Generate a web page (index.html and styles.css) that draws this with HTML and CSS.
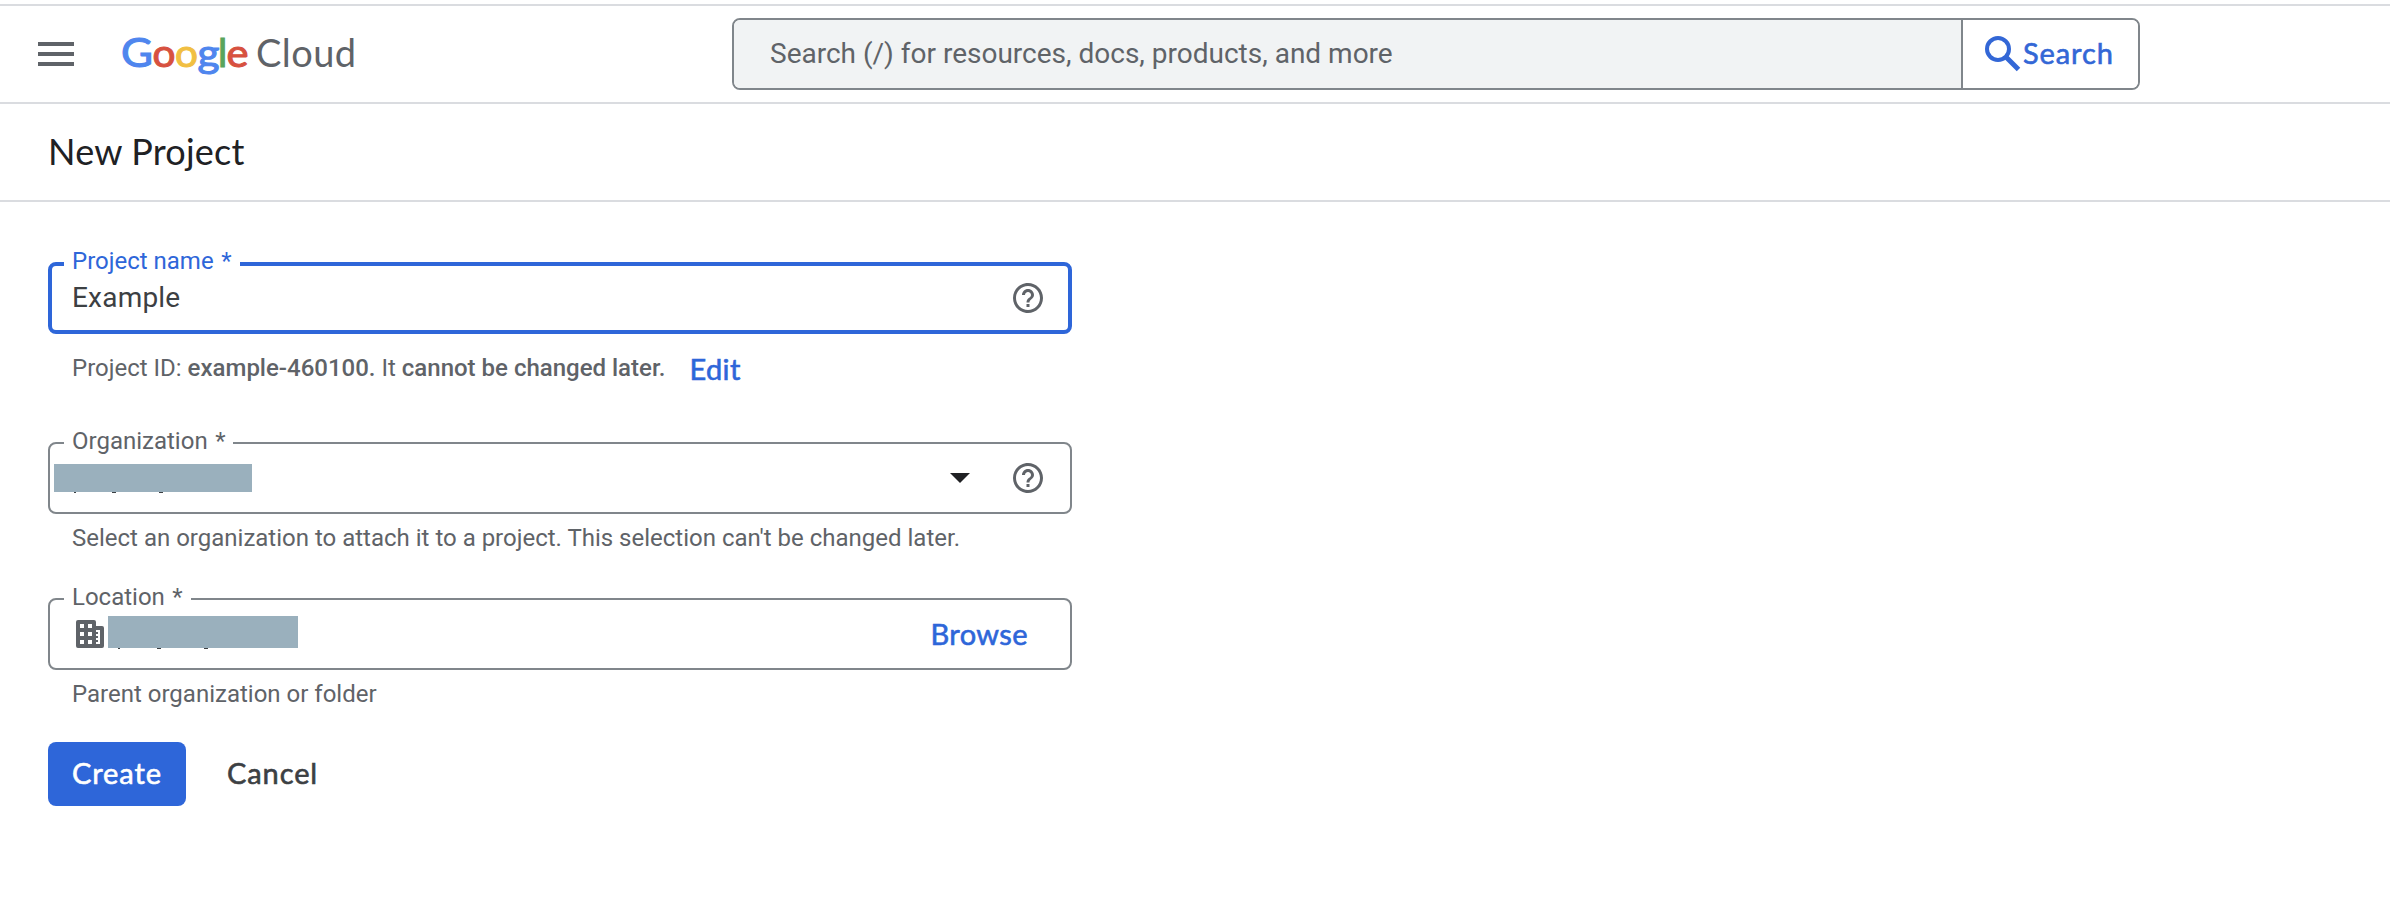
FILE: index.html
```html
<!DOCTYPE html>
<html lang="en">
<head>
<meta charset="utf-8">
<title>New Project</title>
<link rel="stylesheet" href="styles.css">
</head>
<body>
<header class="topbar">
  <button class="menu" aria-label="Menu"><i></i><i></i><i></i></button>
  <div class="logo" aria-label="Google Cloud">
    <svg width="240" height="60" viewBox="0 0 240 60">
      <g class="logo-google"><text x="0" y="43" textLength="32" lengthAdjust="spacingAndGlyphs" fill="#4f86ee" class="logo-cap">G</text><text x="31.500" y="43" textLength="23" lengthAdjust="spacingAndGlyphs" fill="#d75140">o</text><text x="54" y="43" textLength="23" lengthAdjust="spacingAndGlyphs" fill="#f1bf42">o</text><text x="76.500" y="43" textLength="22" lengthAdjust="spacingAndGlyphs" fill="#4f86ee">g</text><text x="97" y="43" fill="#58a55c">l</text><text x="105.500" y="43" textLength="22" lengthAdjust="spacingAndGlyphs" fill="#d75140">e</text></g>
      <text x="135" y="43" textLength="100" class="logo-cloud">Cloud</text>
    </svg>
  </div>
  <div class="search">
    <div class="search-input">Search (/) for resources, docs, products, and more</div>
    <button class="search-button">
      <svg width="36" height="36" viewBox="0 0 36 36" fill="none" stroke="currentColor"><circle cx="13" cy="13" r="11" stroke-width="4"/><path d="M21 21L33.500 33.500" stroke-width="5"/></svg>
      <span>Search</span>
    </button>
  </div>
</header>
<div class="titlebar"><h1>New Project</h1></div>
<main class="form">
  <div class="field focused">
    <label class="label">Project name<span class="star">*</span></label>
    <span class="value">Example</span>
    <svg class="help" width="36" height="36" viewBox="0 0 24 24"><path d="M11 18h2v-2h-2v2zm1-16C6.480 2 2 6.480 2 12s4.480 10 10 10 10-4.480 10-10S17.520 2 12 2zm0 18c-4.410 0-8-3.590-8-8s3.590-8 8-8 8 3.590 8 8-3.590 8-8 8zm0-14c-2.210 0-4 1.790-4 4h2c0-1.100.9-2 2-2s2 .9 2 2c0 2-3 1.750-3 5h2c0-2.250 3-2.500 3-5 0-2.210-1.790-4-4-4z"/></svg>
  </div>
  <div class="project-id"><span class="id-text">Project ID: <b>example-460100.</b> It <b>cannot be changed later.</b></span><a class="edit">Edit</a></div>

  <div class="field">
    <label class="label">Organization<span class="star">*</span></label>
    <span class="redacted org"><i></i><i></i><i></i></span>
    <svg class="arrow" width="20" height="10" viewBox="0 0 20 10"><path d="M0 0h20L10 10z"/></svg>
    <svg class="help" width="36" height="36" viewBox="0 0 24 24"><path d="M11 18h2v-2h-2v2zm1-16C6.480 2 2 6.480 2 12s4.480 10 10 10 10-4.480 10-10S17.520 2 12 2zm0 18c-4.410 0-8-3.590-8-8s3.590-8 8-8 8 3.590 8 8-3.590 8-8 8zm0-14c-2.210 0-4 1.790-4 4h2c0-1.100.9-2 2-2s2 .9 2 2c0 2-3 1.750-3 5h2c0-2.250 3-2.500 3-5 0-2.210-1.790-4-4-4z"/></svg>
  </div>
  <p class="hint hint-org">Select an organization to attach it to a project. This selection can't be changed later.</p>

  <div class="field">
    <label class="label">Location<span class="star">*</span></label>
    <svg class="building" width="28" height="28" viewBox="0 0 28 28"><path fill-rule="evenodd" d="M2 0H18Q20 0 20 2V6H26Q28 6 28 8V26Q28 28 26 28H2Q0 28 0 26V2Q0 0 2 0ZM4 4V8H8V4ZM12 4V8H16V4ZM4 12V16H8V12ZM12 12V16H16V12ZM4 20V24H8V20ZM12 20V24H16V20ZM20 10V12H22V14H20V16H22V18H20V20H22V22H20V24H24V10Z"/></svg>
    <span class="redacted loc"><i></i><i></i><i></i></span>
    <a class="browse">Browse</a>
  </div>
  <p class="hint hint-loc">Parent organization or folder</p>

  <div class="actions">
    <button class="create">Create</button>
    <button class="cancel">Cancel</button>
  </div>
</main>
</body>
</html>
```
FILE: styles.css
```css
* { box-sizing: border-box; }
body { margin: 0; background: #fff; color: #3c4043; font-family: Roboto, sans-serif; font-size: 28px; }
button { border: 0; margin: 0; padding: 0; background: none; font: inherit; letter-spacing: inherit; }
svg { display: block; flex: none; }

.topbar { margin-top: 4px; height: 100px; border-top: 2px solid #dadce0; border-bottom: 2px solid #dadce0; display: flex; align-items: center; padding-left: 38px; }
.menu { width: 36px; display: flex; flex-direction: column; gap: 6px; }
.menu i { height: 4px; background: #5f6368; }
.logo { width: 240px; height: 60px; margin-left: 47px; margin-right: 371px; }
.logo svg { overflow: visible; }
.logo text { font-family: Lato, sans-serif; font-size: 39px; }
.logo-google text { stroke-width: 1.1px; }
.logo-google text[fill="#4f86ee"] { stroke: #4f86ee; }
.logo-google text[fill="#d75140"] { stroke: #d75140; }
.logo-google text[fill="#f1bf42"] { stroke: #f1bf42; }
.logo-google text[fill="#58a55c"] { stroke: #58a55c; }
.logo .logo-cap { font-size: 41px; }
.logo .logo-cloud { fill: #5f6368; font-size: 38px; }

.search { width: 1408px; height: 72px; border: 2px solid #80868b; border-radius: 8px; display: flex; overflow: hidden; }
.search-input { flex: 1; background: #f1f3f4; color: #5f6368; padding-left: 36px; line-height: 68px; white-space: nowrap; }
.search-button { width: 177px; border-left: 2px solid #80868b; background: #fff; color: #3367d6; display: flex; align-items: center; padding-left: 22px; gap: 2px; }
.search-button, .edit, .browse, .actions { font: 400 29px/66px Lato, sans-serif; letter-spacing: 0.9px; -webkit-text-stroke: 0.6px currentColor; }
.search-button span { margin-top: -2px; }

.titlebar { height: 98px; border-bottom: 2px solid #dadce0; padding-left: 48px; }
h1 { margin: 0; font: 400 36px/94px Lato, sans-serif; color: #202124; letter-spacing: 0.2px; }

.form { width: 1072px; padding: 60px 0 0 48px; }
.field { position: relative; height: 72px; border: 2px solid #80868b; border-radius: 8px; display: flex; align-items: center; }
.field.focused { border: 4px solid #2e66d9; }
.label { position: absolute; left: 14px; top: -17px; padding: 0 8px; background: #fff; color: #5f6368; font-size: 24px; line-height: 28px; white-space: nowrap; }
.focused .label { left: 12px; top: -19px; color: #2e66d9; }
.star { margin-left: 7.500px; }
.value { margin: -2px 0 0 20px; letter-spacing: 0.2px; }
.help { margin-left: auto; margin-right: 24px; fill: #5f6368; }
.focused .help { margin-right: 22px; }
.arrow { margin-left: auto; fill: #202124; }
.arrow + .help { margin-left: 40px; }

.project-id { height: 108px; padding: 16px 0 0 24px; display: flex; align-items: flex-start; gap: 24px; color: #5f6368; font-size: 24px; line-height: 36px; white-space: nowrap; }
.project-id b { font-weight: 500; }
.edit, .browse { color: #2e66d9; line-height: 37px; letter-spacing: 0.4px; }

.redacted { position: relative; background: #9ab0bd; }
.redacted i { position: absolute; top: 100%; width: 4px; height: 1px; background: #3c4043; }
.org { width: 198px; height: 28px; margin-left: 4px; }
.org i:nth-child(1) { left: 20px; width: 2px; }
.org i:nth-child(2) { left: 58px; }
.org i:nth-child(3) { left: 105px; }
.building { margin-left: 26px; fill: #5f6368; }
.loc { width: 190px; height: 32px; margin: -4px 0 0 4px; }
.loc i:nth-child(1) { left: 10px; width: 2px; }
.loc i:nth-child(2) { left: 49px; }
.loc i:nth-child(3) { left: 96px; }
.browse { margin: -2px 42px 0 auto; }

.hint { margin: 0; padding: 6px 0 0 24px; color: #5f6368; font-size: 24px; line-height: 36px; white-space: nowrap; }
.hint-org { height: 84px; }
.hint-loc { height: 72px; }

.actions { display: flex; align-items: center; gap: 41px; line-height: 62px; }
.create { width: 138px; height: 64px; border-radius: 8px; background: #2e66d9; color: #fff; padding-bottom: 2px; }
.cancel { color: #3c4043; padding-bottom: 2px; }
```
